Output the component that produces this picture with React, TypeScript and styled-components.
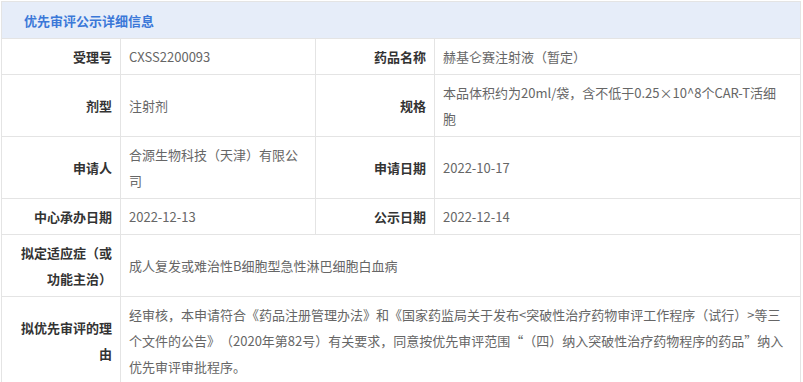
import React from 'react';
import styled, { createGlobalStyle } from 'styled-components';

const GlobalStyle = createGlobalStyle`
  body {
    margin: 1px;
    background: #fff;
    font-family: "Noto Sans CJK SC", "Noto Sans", sans-serif;
    font-size: 13px;
    text-spacing-trim: space-all;
  }
`;

const Panel = styled.div`
  box-sizing: border-box;
  width: 800px;
  border: 1px solid #e4e4e4;
  background: #fff;
`;

const Header = styled.div`
  height: 36px;
  display: flex;
  align-items: center;
  padding-left: 22px;
  background: #e6edf9;
  border-bottom: 1px solid #e4e4e4;
  color: #3b78d8;
  font-weight: 700;
  font-size: 13px;
`;

const Grid = styled.div`
  display: grid;
  grid-template-columns: 118px 194px 118px 1fr;
  gap: 1px;
  background: #e4e4e4;
`;

const Label = styled.div`
  display: flex;
  align-items: center;
  justify-content: flex-end;
  text-align: right;
  padding: 5px 8px 4px 16px;
  line-height: 26px;
  background: #fff;
  color: #333;
  font-weight: 700;
`;

const Value = styled.div<{ $span?: number }>`
  display: flex;
  align-items: center;
  padding: 5px 16px 4px 8px;
  line-height: 26px;
  background: #fff;
  color: #666;
  grid-column: span ${(p) => p.$span ?? 1};
`;

type Cell = { label: string; value: string; span?: number };

const rows: Cell[][] = [
  [
    { label: '受理号', value: 'CXSS2200093' },
    { label: '药品名称', value: '赫基仑赛注射液（暂定）' },
  ],
  [
    { label: '剂型', value: '注射剂' },
    { label: '规格', value: '本品体积约为20ml/袋，含不低于0.25×10^8个CAR-T活细胞' },
  ],
  [
    { label: '申请人', value: '合源生物科技（天津）有限公司' },
    { label: '申请日期', value: '2022-10-17' },
  ],
  [
    { label: '中心承办日期', value: '2022-12-13' },
    { label: '公示日期', value: '2022-12-14' },
  ],
  [{ label: '拟定适应症（或功能主治）', value: '成人复发或难治性B细胞型急性淋巴细胞白血病', span: 3 }],
  [
    {
      label: '拟优先审评的理由',
      value:
        '经审核，本申请符合《药品注册管理办法》和《国家药监局关于发布<突破性治疗药物审评工作程序（试行）>等三个文件的公告》（2020年第82号）有关要求，同意按优先审评范围“（四）纳入突破性治疗药物程序的药品”纳入优先审评审批程序。',
      span: 3,
    },
  ],
];

export default function App() {
  return (
    <>
      <GlobalStyle />
      <Panel>
        <Header>优先审评公示详细信息</Header>
        <Grid>
          {rows.flat().map((c) => (
            <React.Fragment key={c.label}>
              <Label>{c.label}</Label>
              <Value $span={c.span}>{c.value}</Value>
            </React.Fragment>
          ))}
        </Grid>
      </Panel>
    </>
  );
}
